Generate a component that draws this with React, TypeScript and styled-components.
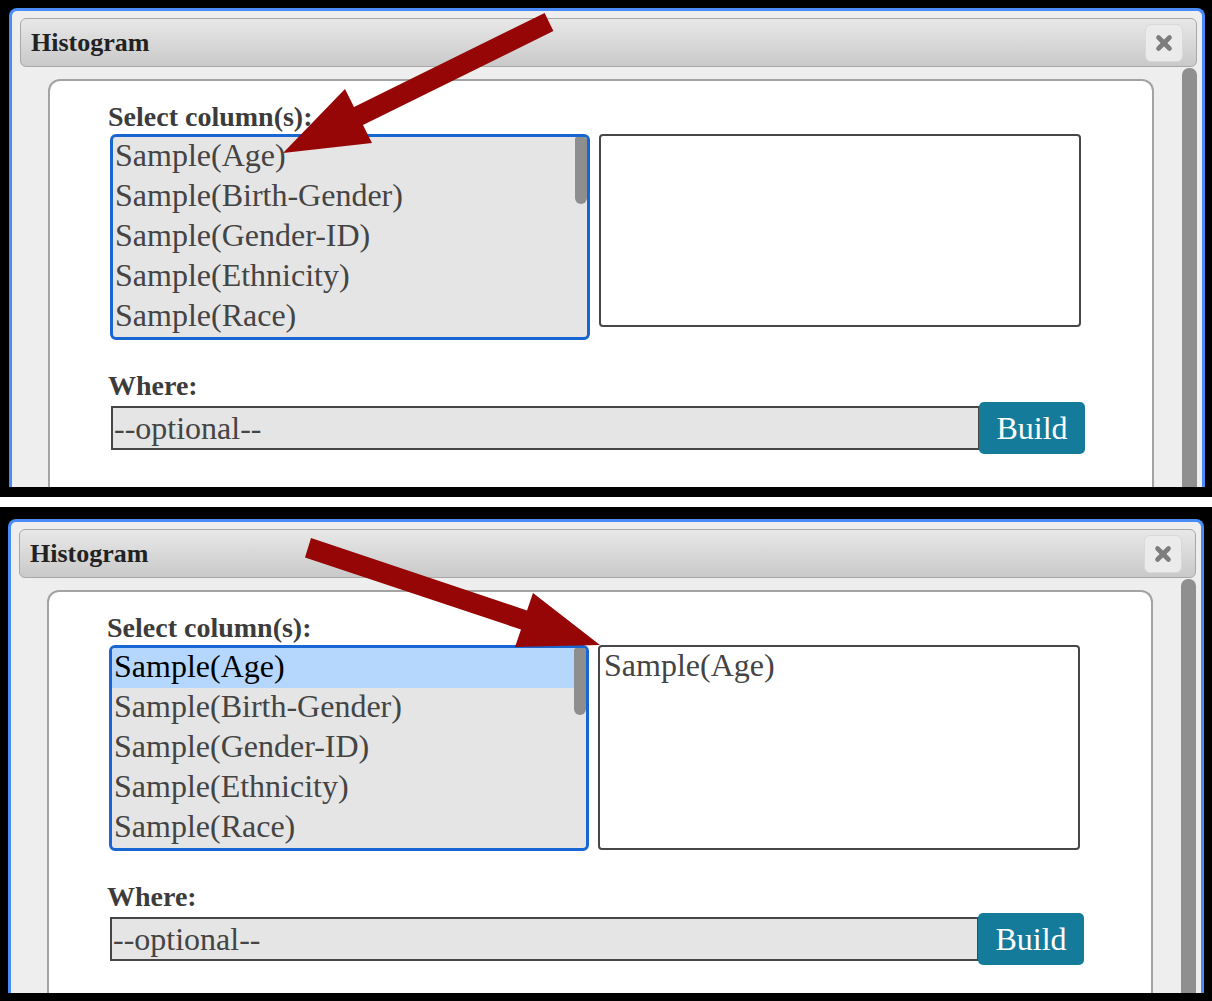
import React from "react";
import styled, { createGlobalStyle } from "styled-components";

const Global = createGlobalStyle`
  html, body { margin: 0; padding: 0; background: #ffffff; }
  body { font-family: "Liberation Serif", "Times New Roman", serif; }
`;

const Page = styled.div`
  width: 1212px;
  display: flex;
  flex-direction: column;
  gap: 10px;
`;

const Frame = styled.div<{ $pad: string; $h: number }>`
  position: relative;
  box-sizing: border-box;
  height: ${(p) => p.$h}px;
  padding: ${(p) => p.$pad};
  background: #000000;
`;

const Window = styled.div`
  box-sizing: border-box;
  height: 100%;
  border: 3px solid #4a8cf7;
  border-bottom: none;
  border-radius: 8px 8px 0 0;
  background: #eeeeee;
  overflow: hidden;
  display: flex;
  flex-direction: column;
`;

const TitleBar = styled.div`
  box-sizing: border-box;
  flex: none;
  height: 49px;
  margin: 7px 5px 0 8px;
  border: 1px solid #a8a8a8;
  border-radius: 6px;
  background: linear-gradient(#e8e8e8, #c9c9c9);
  display: flex;
  align-items: center;
  justify-content: space-between;
  padding: 0 13px 0 10px;
`;

const Title = styled.span`
  font-weight: bold;
  font-size: 26px;
  color: #222222;
`;

const CloseButton = styled.button`
  box-sizing: border-box;
  width: 38px;
  height: 38px;
  padding: 0;
  border: 1px solid #d9d9d9;
  border-radius: 6px;
  background: #ebebeb;
  display: flex;
  align-items: center;
  justify-content: center;
`;

const Body = styled.div`
  flex: 1;
  min-height: 0;
  display: flex;
  padding-right: 5px;
`;

const BodyMain = styled.div`
  flex: 1;
  display: flex;
  flex-direction: column;
  padding: 12px 28px 0 36px;
`;

const ScrollTrack = styled.div`
  width: 15px;
  padding-top: 1px;
  display: flex;
  flex-direction: column;
`;

const ScrollThumb = styled.div`
  flex: 1;
  background: #8f8f8f;
  border-radius: 7px 7px 0 0;
`;

const Fieldset = styled.div`
  flex: 1;
  box-sizing: border-box;
  border: 2px solid #a3a3a3;
  border-bottom: none;
  border-radius: 12px 12px 0 0;
  background: #ffffff;
  padding: 20px 0 0 60px;
`;

const FieldLabel = styled.div<{ $mt?: number }>`
  font-weight: bold;
  font-size: 28px;
  line-height: 31px;
  color: #3c3c3c;
  margin: ${(p) => p.$mt ?? 0}px 0 0 -2px;
`;

const Columns = styled.div`
  display: flex;
  align-items: flex-start;
  gap: 9px;
  margin-top: 2px;
`;

const ListBox = styled.div`
  box-sizing: border-box;
  width: 480px;
  height: 206px;
  border: 3px solid #1766d1;
  border-radius: 6px;
  background: #e5e5e5;
  display: flex;
  overflow: hidden;
`;

const Options = styled.div`
  flex: 1;
  display: flex;
  flex-direction: column;
`;

const Option = styled.div<{ $selected?: boolean }>`
  box-sizing: border-box;
  height: 40px;
  line-height: 36px;
  padding: 0 2px;
  font-size: 32px;
  white-space: nowrap;
  color: ${(p) => (p.$selected ? "#000000" : "#444444")};
  background: ${(p) => (p.$selected ? "#b5d7fe" : "transparent")};
`;

const ListScroll = styled.div`
  width: 12px;
`;

const ListThumb = styled.div`
  height: 67px;
  background: #8e8e8e;
  border-radius: 2px 0 6px 6px;
`;

const PickedBox = styled.div<{ $h: number }>`
  box-sizing: border-box;
  width: 482px;
  height: ${(p) => p.$h}px;
  border: 2px solid #474747;
  border-radius: 4px;
  background: #ffffff;
  padding: 0 0 0 4px;
`;

const PickedItem = styled.div`
  font-size: 32px;
  line-height: 36px;
  color: #444444;
`;

const WhereRow = styled.div`
  display: flex;
  align-items: center;
  margin-top: 1px;
`;

const WhereInput = styled.input`
  box-sizing: border-box;
  width: 869px;
  height: 44px;
  margin: 0 0 0 1px;
  padding: 0 0 0 1px;
  border: 2px solid #464646;
  border-radius: 0;
  background: #e5e5e5;
  font-family: inherit;
  font-size: 32px;
  color: #444444;
  outline: none;
  &::placeholder {
    color: #444444;
    opacity: 1;
  }
`;

const BuildButton = styled.button`
  position: relative;
  box-sizing: border-box;
  width: 106px;
  height: 52px;
  margin-left: -1px;
  padding: 0;
  border: none;
  border-radius: 5px;
  background: #157b9b;
  color: #ffffff;
  font-family: inherit;
  font-size: 32px;
`;

const ArrowLayer = styled.svg`
  position: absolute;
  left: 0;
  top: 0;
  pointer-events: none;
  overflow: visible;
`;

const OPTIONS = [
  "Sample(Age)",
  "Sample(Birth-Gender)",
  "Sample(Gender-ID)",
  "Sample(Ethnicity)",
  "Sample(Race)",
];

function CloseIcon() {
  return (
    <svg width="18" height="18" viewBox="0 0 18 18">
      <g stroke="#7d7d7d" strokeWidth="4.6" strokeLinecap="round">
        <line x1="3.5" y1="3.5" x2="14.5" y2="14.5" />
        <line x1="14.5" y1="3.5" x2="3.5" y2="14.5" />
      </g>
    </svg>
  );
}

type DialogProps = {
  pad: string;
  height: number;
  selected: boolean;
  pickedHeight: number;
  arrow: string;
};

function DialogShot({ pad, height, selected, pickedHeight, arrow }: DialogProps) {
  return (
    <Frame $pad={pad} $h={height}>
      <Window>
        <TitleBar>
          <Title>Histogram</Title>
          <CloseButton aria-label="close">
            <CloseIcon />
          </CloseButton>
        </TitleBar>
        <Body>
          <BodyMain>
            <Fieldset>
              <FieldLabel>Select column(s):</FieldLabel>
              <Columns>
                <ListBox>
                  <Options>
                    {OPTIONS.map((o, i) => (
                      <Option key={o} $selected={selected && i === 0}>
                        {o}
                      </Option>
                    ))}
                  </Options>
                  <ListScroll>
                    <ListThumb />
                  </ListScroll>
                </ListBox>
                <PickedBox $h={pickedHeight}>
                  {selected && <PickedItem>Sample(Age)</PickedItem>}
                </PickedBox>
              </Columns>
              <FieldLabel $mt={30}>Where:</FieldLabel>
              <WhereRow>
                <WhereInput placeholder="--optional--" readOnly />
                <BuildButton>Build</BuildButton>
              </WhereRow>
            </Fieldset>
          </BodyMain>
          <ScrollTrack>
            <ScrollThumb />
          </ScrollTrack>
        </Body>
      </Window>
      <ArrowLayer width="1212" height={height} viewBox={`0 0 1212 ${height}`}>
        <polygon points={arrow} fill="#960606" />
      </ArrowLayer>
    </Frame>
  );
}

export default function App() {
  return (
    <>
      <Global />
      <Page>
        <DialogShot
          pad="8px 7px 10px 9px"
          height={497}
          selected={false}
          pickedHeight={193}
          arrow="544.6,13 354,107 345,89 283,153 372,143 363,125 553.4,31"
        />
        <DialogShot
          pad="12px 8px 8px 8px"
          height={494}
          selected={true}
          pickedHeight={205}
          arrow="311,31 527,103.5 533,86 600,138 515,140 521,122.5 305,50.5"
        />
      </Page>
    </>
  );
}
